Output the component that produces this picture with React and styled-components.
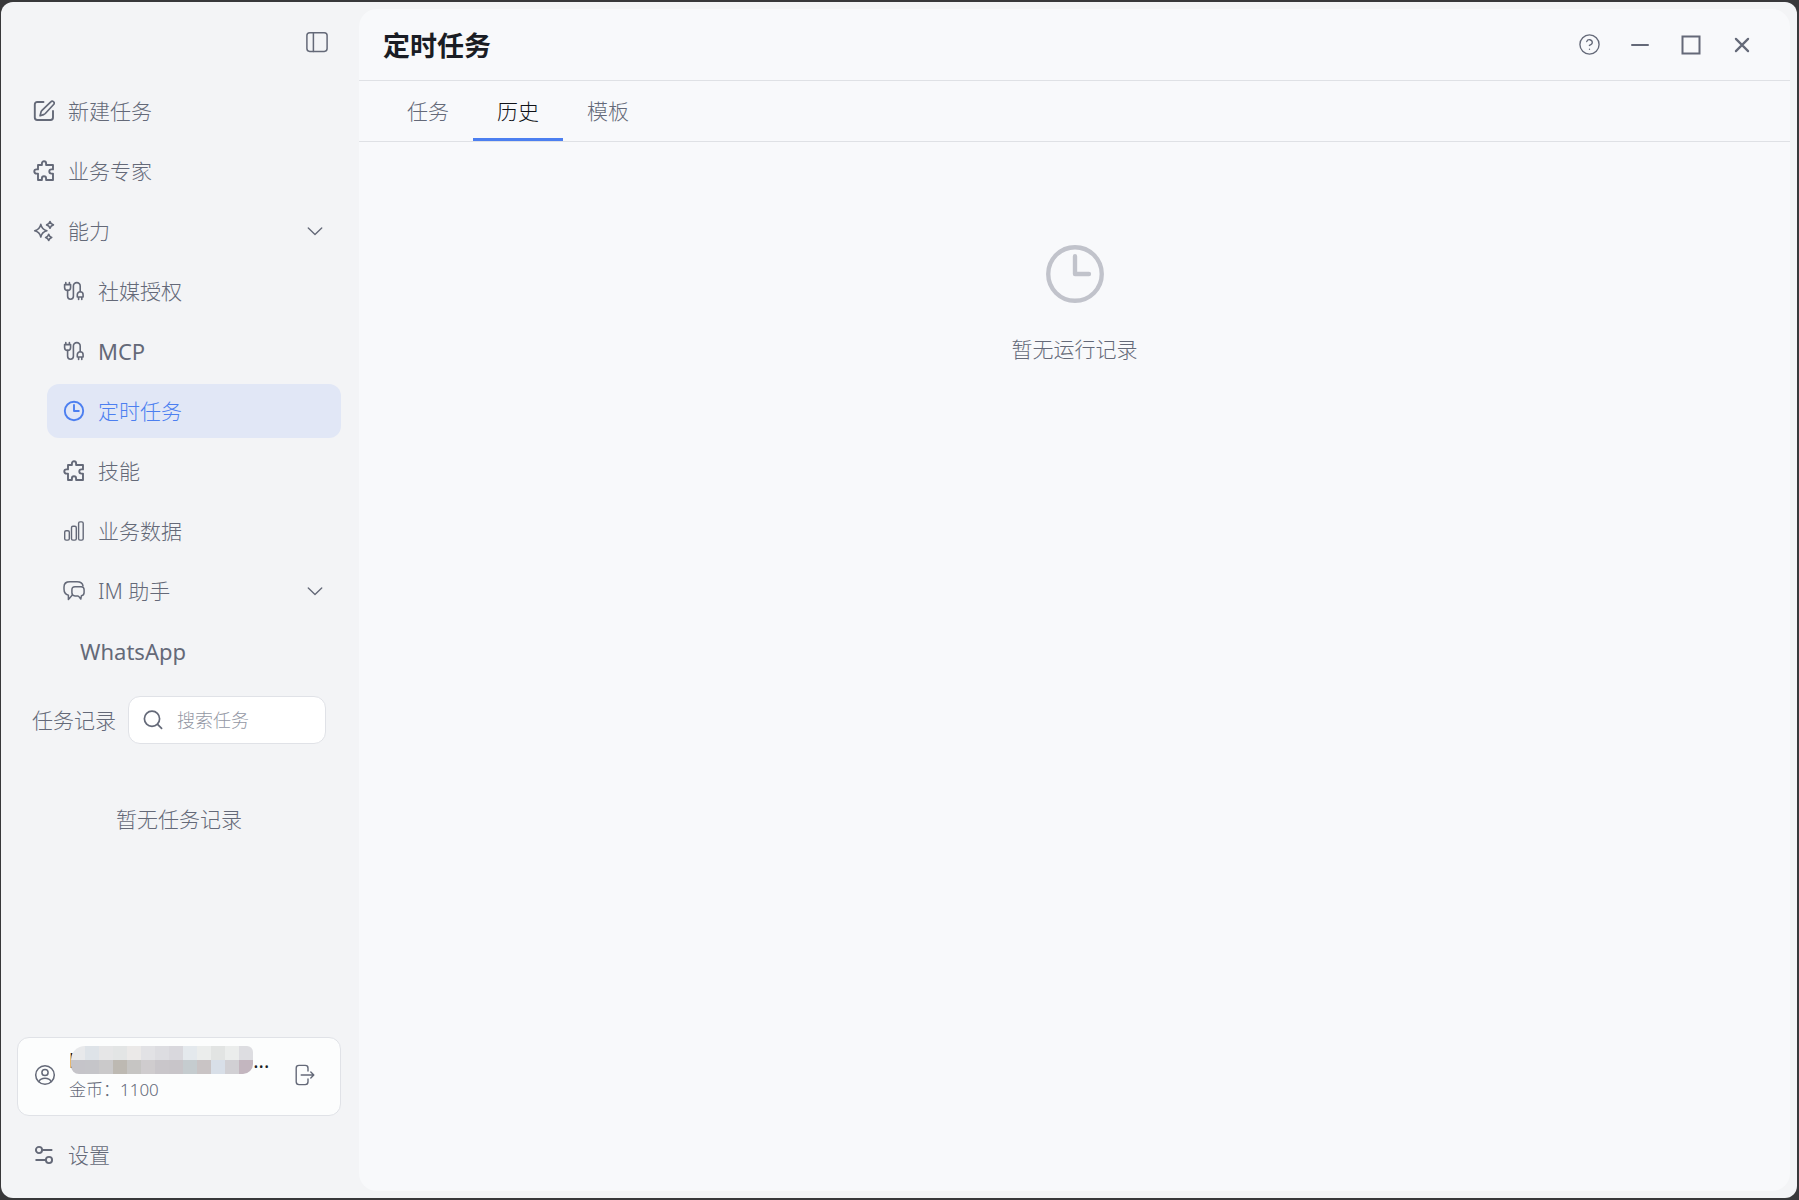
import React, { Component } from "react";
import styled, { createGlobalStyle } from "styled-components";
import { CircleHelp } from "lucide-react";

const GlobalStyle = createGlobalStyle`
  * {
    box-sizing: border-box;
  }

  body {
    margin: 0;
    background: #38383a;
    color: #646978;
    font-family: "Noto Sans", "Noto Sans CJK SC", sans-serif;
    font-size: 21px;
    font-weight: 300;
    line-height: 30px;
  }

  button, input {
    font: inherit;
    color: inherit;
  }
`;

const Shell = styled.div`
  min-height: 100vh;
  padding: 2px 2px 2px 1px;
  display: flex;
`;

const Window = styled.div`
  flex: 1;
  display: flex;
  padding-right: 7px;
  border-radius: 12px;
  background: #f3f4f6;
`;

const Sidebar = styled.aside`
  flex: 0 0 358px;
  min-width: 0;
  display: flex;
  flex-direction: column;
  padding: 0 18px 16px 16px;
`;

const SidebarHead = styled.div`
  display: flex;
  align-items: center;
  justify-content: flex-end;
  height: 82px;
  padding: 0 13px 2px;
`;

const IconButton = styled.button`
  display: flex;
  padding: 0;
  border: 0;
  background: none;
  cursor: pointer;
`;

const Nav = styled.nav`
  display: flex;
  flex-direction: column;
  gap: 6px;
`;

const NavItem = styled.button`
  display: flex;
  align-items: center;
  gap: 13px;
  height: 54px;
  margin-left: ${props => (props.$level ? "30px" : "0")};
  padding: 0 16px;
  padding-left: ${props => (props.$level === 2 ? "33px" : "16px")};
  border: 0;
  border-radius: 12px;
  background: ${props => (props.$active ? "#e1e7f6" : "transparent")};
  color: ${props => (props.$active ? "#4c7ff0" : "inherit")};
  text-align: left;
  cursor: pointer;
`;

const NavLabel = styled.span`
  flex: 1;
  font-size: ${props => (props.$latin ? "22px" : "21px")};
  font-weight: ${props => (props.$latin ? 400 : 300)};
`;

const SearchRow = styled.div`
  display: flex;
  align-items: center;
  gap: 12px;
  margin-top: 18px;
  padding: 0 15px;
`;

const SearchLabel = styled.label`
  flex: none;
`;

const SearchBox = styled.div`
  flex: 1;
  min-width: 0;
  display: flex;
  align-items: center;
  gap: 13px;
  height: 48px;
  padding: 0 13px;
  border: 1px solid #e0e2e7;
  border-radius: 12px;
  background: #ffffff;
`;

const SearchInput = styled.input`
  flex: 1;
  min-width: 0;
  padding: 0;
  border: 0;
  outline: 0;
  background: none;
  font-size: 18px;

  &::placeholder {
    color: #9397a4;
    opacity: 1;
  }
`;

const NoRecords = styled.p`
  margin: 60px 0;
  text-align: center;
`;

const SidebarFoot = styled.div`
  display: flex;
  flex-direction: column;
  gap: 12px;
  margin-top: auto;
`;

const Account = styled.div`
  display: flex;
  align-items: center;
  gap: 13px;
  height: 79px;
  padding: 0 24px 3px 16px;
  border: 1px solid #e0e2e7;
  border-radius: 12px;
  background: #fcfdfd;
`;

const AccountText = styled.div`
  flex: 1;
  min-width: 0;
  font-size: 17px;
  line-height: 29px;
`;

const AccountName = styled.div`
  display: flex;
  color: #1a1d24;
  font-size: 20px;
  font-weight: 400;
`;

const Mosaic = styled.span`
  flex: 0 1 182px;
  display: grid;
  grid-template-columns: repeat(13, 14px);
  grid-auto-rows: 14px;
  height: 28px;
  margin-left: -3px;
  overflow: hidden;
  border-radius: 14px 6px 10px 8px;
`;

const MosaicCell = styled.i`
  background: ${props => props.$color};
`;

const Main = styled.main`
  flex: 1;
  margin: 7px 0;
  border-radius: 18px;
  background: #f8f9fb;
`;

const Header = styled.header`
  display: flex;
  align-items: center;
  justify-content: space-between;
  height: 72px;
  padding: 0 24px;
  border-bottom: 1px solid #dfe1e5;
`;

const Title = styled.h1`
  margin: 0;
  padding-top: 2px;
  color: #1a1d24;
  font-size: 27px;
  font-weight: 700;
`;

const WindowControls = styled.div`
  display: flex;
  gap: 3px;
`;

const ControlButton = styled(IconButton)`
  align-items: center;
  justify-content: center;
  width: 48px;
  height: 48px;
`;

const Tabs = styled.div`
  display: flex;
  height: 61px;
  padding: 0 24px;
  border-bottom: 1px solid #dfe1e5;
`;

const Tab = styled.button`
  padding: 3px 24px 0;
  border: 0;
  border-bottom: 3px solid ${props => (props.$active ? "#4c7ff0" : "transparent")};
  border-radius: 2px 2px 0 0;
  background: none;
  color: ${props => (props.$active ? "#101218" : "inherit")};
  cursor: pointer;
`;

const Empty = styled.div`
  display: flex;
  flex-direction: column;
  align-items: center;
  gap: 28px;
  padding-top: 100px;
`;

const EmptyIcon = styled.div`
  height: 64px;
  color: #c1c3cb;
`;

const Icon = ({ size = 22, stroke = 1.9, children }) => (
  <svg
    width={size}
    height={size}
    viewBox="0 0 22 22"
    fill="none"
    stroke="currentColor"
    strokeWidth={stroke}
    strokeLinecap="round"
    strokeLinejoin="round"
    aria-hidden="true"
  >
    {children}
  </svg>
);

const PanelIcon = () => (
  <Icon stroke={1.5}>
    <rect x="0.9" y="1.8" width="20.2" height="18.6" rx="2.8" />
    <path d="M7.4 1.8v18.6" />
  </Icon>
);

const EditIcon = () => (
  <Icon>
    <path d="M10.5 2H4.2a2.4 2.4 0 0 0-2.4 2.4v13.2A2.4 2.4 0 0 0 4.2 20h13.4a2.4 2.4 0 0 0 2.4-2.4V11" />
    <path
      strokeWidth="1.7"
      d="M17.8 1.8a1.9 1.9 0 0 1 2.8 2.7l-8.3 9c-.5.5-1 .9-1.7 1.1l-3.5 1.2.9-3.7c.2-.7.5-1.2 1-1.7z"
    />
  </Icon>
);

const PuzzleIcon = () => (
  <Icon>
    <path d="M8.9 5V3.4a2.1 2.1 0 0 1 4.2 0V5H20v4.4h-1.6a2.1 2.1 0 0 0 0 4.2H20V20h-6.9v-1.6a2.1 2.1 0 0 0-4.2 0V20H5v-6.4H3.4a2.1 2.1 0 0 1 0-4.2H5V5z" />
  </Icon>
);

const SparklesIcon = () => (
  <Icon stroke={1.6}>
    <path d="M7.8 4.4c.8 3.8 2.5 5.5 6.1 6.3-3.6.8-5.3 2.5-6.1 6.3-.8-3.8-2.5-5.5-6.1-6.3 3.6-.8 5.3-2.5 6.1-6.3z" />
    <path d="M17 1.5c.5 2 1.4 2.9 3.4 3.4-2 .5-2.9 1.4-3.4 3.4-.5-2-1.4-2.9-3.4-3.4 2-.5 2.9-1.4 3.4-3.4z" />
    <path d="M15.7 14.3c.5 1.9 1.2 2.6 3.1 3.1-1.9.5-2.6 1.2-3.1 3.1-.5-1.9-1.2-2.6-3.1-3.1 1.9-.5 2.6-1.2 3.1-3.1z" />
  </Icon>
);

const PlugIcon = () => (
  <Icon stroke={1.6}>
    <path d="M2.8 2.5v2M6.4 2.5v2M1.6 4.6h6V7.4a3 3 0 0 1-6 0z" />
    <path d="M4.6 10.4v5.9a2.9 2.9 0 0 0 5.8 0V6a3.4 3.4 0 0 1 6.8 0v5.8" />
    <path d="M14.3 17v-2.3a2.9 2.9 0 0 1 5.8 0V17zM15.6 17.2v2.3M18.8 17.2v2.3" />
  </Icon>
);

const ClockIcon = ({ size, stroke }) => (
  <Icon size={size} stroke={stroke}>
    <circle cx="11" cy="11" r="9.2" />
    <path d="M11 4.9V11h4.8" />
  </Icon>
);

const ChartIcon = () => (
  <Icon stroke={1.4}>
    <rect x="1.7" y="10.7" width="4.6" height="9.4" rx="1.4" />
    <rect x="8.5" y="6.3" width="4.8" height="13.8" rx="1.4" />
    <rect x="15.6" y="1.9" width="4.6" height="18.2" rx="1.4" />
  </Icon>
);

const ChatIcon = () => (
  <Icon stroke={1.5}>
    <path d="M8.8 15.6c-1.1.9-1.8 2.8-3.4 3.9v-4.2C2.3 14.4 1 13 1 9V7c0-4 1.8-5.3 6-5.3h7c3.8 0 5.6 1 6 4.2" />
    <path d="M12 6.7h6.1c2.2 0 3 1 3 3.1v2.7c0 2-.8 3-2.7 3.3l-.6 3.3c-1-1.4-1.7-2.6-3-3.2H12c-2.2 0-3.1-1-3.1-3.1v-3c0-2.1.9-3.1 3.1-3.1z" />
  </Icon>
);

const ChevronIcon = () => (
  <Icon size={20} stroke={1.5}>
    <path d="M3.6 7.6 11 14.8l7.4-7.2" />
  </Icon>
);

const SearchIcon = () => (
  <Icon size={22} stroke={1.7}>
    <circle cx="10" cy="9.8" r="7.6" />
    <path d="m15.6 15.3 4 4" />
  </Icon>
);

const UserIcon = () => (
  <Icon stroke={1.5}>
    <circle cx="11" cy="11" r="9.3" />
    <circle cx="11" cy="8.5" r="3.1" />
    <path d="M4.9 17.6c1.2-2.5 3.3-3.3 6.1-3.3s4.9.8 6.1 3.3" />
  </Icon>
);

const LogoutIcon = () => (
  <Icon stroke={1.4}>
    <path d="M14 7V4.2c0-2-.8-2.8-2.8-2.8H5c-2 0-2.8.8-2.8 2.8v13.6c0 2 .8 2.8 2.8 2.8h6.2c2 0 2.8-.8 2.8-2.8V15" />
    <path d="M7.2 11h12.4M16.8 8l3 3-3 3" />
  </Icon>
);

const SettingsIcon = () => (
  <Icon>
    <circle cx="6" cy="6" r="3.1" />
    <path d="M9.6 6h9M3.2 16h9" />
    <circle cx="16" cy="16" r="3.1" />
  </Icon>
);

const MinimizeIcon = () => (
  <Icon stroke={2}>
    <path d="M3 11h16" />
  </Icon>
);

const MaximizeIcon = () => (
  <Icon stroke={2}>
    <path strokeLinejoin="miter" d="M2.5 2.5h17v17h-17z" />
  </Icon>
);

const CloseIcon = () => (
  <Icon stroke={2.2}>
    <path d="m4.9 4.9 12.2 12.2M17.1 4.9 4.9 17.1" />
  </Icon>
);

const navItems = [
  { label: "新建任务", icon: EditIcon, level: 0 },
  { label: "业务专家", icon: PuzzleIcon, level: 0 },
  { label: "能力", icon: SparklesIcon, level: 0, open: true },
  { label: "社媒授权", icon: PlugIcon, level: 1 },
  { label: "MCP", icon: PlugIcon, level: 1, latin: true },
  { label: "定时任务", icon: ClockIcon, level: 1 },
  { label: "技能", icon: PuzzleIcon, level: 1 },
  { label: "业务数据", icon: ChartIcon, level: 1 },
  { label: "IM 助手", icon: ChatIcon, level: 1, open: true },
  { label: "WhatsApp", level: 2, latin: true }
];

const tabs = ["任务", "历史", "模板"];

const mosaic = [
  "#e8e9eb", "#dee3e8", "#e6e6e7", "#e3e5e5", "#ebe9e8", "#e2e2e5", "#dddde1",
  "#d9d8dd", "#e4e9ed", "#ebedec", "#e2e4e3", "#ebedec", "#dddde1",
  "#c5c4c9", "#c5c5c9", "#cac9ca", "#bdb9b2", "#c6c5c3", "#cfccce", "#c9c6ca",
  "#c8c5c9", "#c5cccf", "#c9c4c5", "#d8dfe8", "#d1d0d4", "#c3b6bf"
];

class App extends Component {
  constructor() {
    super();

    this.state = {
      page: "定时任务",
      tab: "历史"
    };
  }

  render() {
    return (
      <Shell>
        <GlobalStyle />
        <Window>
          <Sidebar>
            <SidebarHead>
              <IconButton type="button">
                <PanelIcon />
              </IconButton>
            </SidebarHead>
            <Nav>
              {navItems.map(({ label, icon: ItemIcon, level, open, latin }) => (
                <NavItem
                  key={label}
                  type="button"
                  $level={level}
                  $active={label === this.state.page}
                  onClick={() => this.setState({ page: label })}
                >
                  {ItemIcon && <ItemIcon />}
                  <NavLabel $latin={latin}>{label}</NavLabel>
                  {open && <ChevronIcon />}
                </NavItem>
              ))}
            </Nav>
            <SearchRow>
              <SearchLabel htmlFor="task-search">任务记录</SearchLabel>
              <SearchBox>
                <SearchIcon />
                <SearchInput id="task-search" type="text" placeholder="搜索任务" />
              </SearchBox>
            </SearchRow>
            <NoRecords>暂无任务记录</NoRecords>
            <SidebarFoot>
              <Account>
                <UserIcon />
                <AccountText>
                  <AccountName>
                    l
                    <Mosaic>
                      {mosaic.map((color, i) => (
                        <MosaicCell key={i} $color={color} />
                      ))}
                    </Mosaic>
                    ...
                  </AccountName>
                  金币：1100
                </AccountText>
                <IconButton type="button">
                  <LogoutIcon />
                </IconButton>
              </Account>
              <NavItem type="button">
                <SettingsIcon />
                <NavLabel>设置</NavLabel>
              </NavItem>
            </SidebarFoot>
          </Sidebar>
          <Main>
            <Header>
              <Title>定时任务</Title>
              <WindowControls>
                <ControlButton type="button">
                  <CircleHelp size={23} strokeWidth={1.4} />
                </ControlButton>
                <ControlButton type="button">
                  <MinimizeIcon />
                </ControlButton>
                <ControlButton type="button">
                  <MaximizeIcon />
                </ControlButton>
                <ControlButton type="button">
                  <CloseIcon />
                </ControlButton>
              </WindowControls>
            </Header>
            <Tabs>
              {tabs.map(tab => (
                <Tab
                  key={tab}
                  type="button"
                  $active={tab === this.state.tab}
                  onClick={() => this.setState({ tab })}
                >
                  {tab}
                </Tab>
              ))}
            </Tabs>
            <Empty>
              <EmptyIcon>
                <ClockIcon size={64} stroke={1.5} />
              </EmptyIcon>
              <div>暂无运行记录</div>
            </Empty>
          </Main>
        </Window>
      </Shell>
    );
  }
}

export default App;
